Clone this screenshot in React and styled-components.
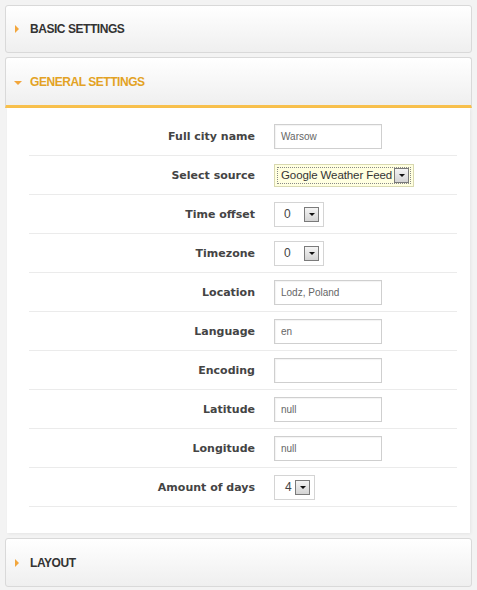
import React from 'react';
import styled, { createGlobalStyle } from 'styled-components';

const Global = createGlobalStyle`
  body {
    margin: 0;
    background: #f3f3f3;
    font-family: 'Liberation Sans', Arial, sans-serif;
  }
`;

const Page = styled.div`
  padding: 5px 5px 3px;
  display: flex;
  flex-direction: column;
`;

const Header = styled.div`
  box-sizing: border-box;
  height: ${(p) => p.h}px;
  margin-top: ${(p) => (p.open ? '4px' : '0')};
  display: flex;
  align-items: center;
  gap: ${(p) => (p.open ? '8px' : '11px')};
  padding-left: ${(p) => (p.open ? '8px' : '9px')};
  padding-top: ${(p) => (p.open ? '1px' : '0')};
  border: 1px solid #d9d9d9;
  border-bottom: ${(p) => (p.open ? '3px solid #f8c04c' : '1px solid #d9d9d9')};
  border-radius: 3px 3px ${(p) => (p.open ? '0 0' : '3px 3px')};
  background: linear-gradient(#ffffff, #efefef);
  font-size: 12px;
  font-weight: bold;
  letter-spacing: -0.45px;
  color: ${(p) => (p.open ? '#e3a224' : '#333')};
`;

const Arrow = styled.span`
  width: 0;
  height: 0;
  ${(p) =>
    p.open
      ? `border-left: 4px solid transparent; border-right: 4px solid transparent; border-top: 4px solid #f2a63c; margin-top: 1px;`
      : `border-top: 4px solid transparent; border-bottom: 4px solid transparent; border-left: 4px solid #f2a63c;`}
`;

const Panel = styled.div`
  margin: 0 2px 5px 2px;
  background: #fff;
  padding: 9px 13px 26px 22px;
  box-shadow: 1px 1px 3px rgba(0, 0, 0, 0.06);
`;

const Row = styled.div`
  height: 38px;
  display: grid;
  grid-template-columns: 226px 1fr;
  column-gap: 19px;
  align-items: center;
  border-bottom: 1px solid #ebebeb;
`;

const Label = styled.div`
  text-align: right;
  font-family: 'DejaVu Sans', Verdana, sans-serif;
  font-size: 11px;
  font-weight: bold;
  color: #444;
`;

const TextInput = styled.div`
  box-sizing: border-box;
  width: 108px;
  height: 25px;
  border: 1px solid #cfcfcf;
  box-shadow: inset 1px 1px 1px rgba(0, 0, 0, 0.05);
  background: #fff;
  display: flex;
  align-items: center;
  padding-left: 6px;
  font-size: 10px;
  color: #666;
`;

const SelectBox = styled.div`
  box-sizing: border-box;
  width: ${(p) => p.w}px;
  height: 25px;
  border: 1px solid #d4d4d4;
  background: #fff;
  display: flex;
  align-items: center;
  justify-content: space-between;
  padding: 0 4px 0 ${(p) => p.pl || 9}px;
  font-size: 12px;
  color: #444;
`;

const Focused = styled.div`
  box-sizing: border-box;
  width: 140px;
  height: 23px;
  border: 1px solid #d8d8b0;
  background: #ffffe0;
  padding: 2px;
  display: flex;
`;

const FocusInner = styled.div`
  flex: 1;
  border: 1px dotted #888;
  display: flex;
  align-items: center;
  justify-content: space-between;
  padding: 0 1px 0 3px;
  font-size: 11.5px;
  letter-spacing: -0.1px;
  white-space: nowrap;
  color: #333;
`;

const DropBtn = styled.span`
  box-sizing: border-box;
  flex: none;
  width: 15px;
  height: 15px;
  border: 1px solid #7a7a7a;
  background: linear-gradient(#f4f4f4, #d4d4d4);
  display: flex;
  align-items: center;
  justify-content: center;
  &::after {
    content: '';
    border-left: 3px solid transparent;
    border-right: 3px solid transparent;
    border-top: 3px solid #111;
  }
`;

const rows = [
  { label: 'Full city name', type: 'text', value: 'Warsow' },
  { label: 'Select source', type: 'focus', value: 'Google Weather Feed' },
  { label: 'Time offset', type: 'select', value: '0', w: 50 },
  { label: 'Timezone', type: 'select', value: '0', w: 50 },
  { label: 'Location', type: 'text', value: 'Lodz, Poland' },
  { label: 'Language', type: 'text', value: 'en' },
  { label: 'Encoding', type: 'text', value: '' },
  { label: 'Latitude', type: 'text', value: 'null' },
  { label: 'Longitude', type: 'text', value: 'null' },
  { label: 'Amount of days', type: 'select', value: '4', w: 41, pl: 10 },
];

function Field({ r }) {
  if (r.type === 'text') return <TextInput>{r.value}</TextInput>;
  if (r.type === 'focus')
    return (
      <Focused>
        <FocusInner>
          {r.value}
          <DropBtn />
        </FocusInner>
      </Focused>
    );
  return (
    <SelectBox w={r.w} pl={r.pl}>
      {r.value}
      <DropBtn />
    </SelectBox>
  );
}

export default function App() {
  return (
    <>
      <Global />
      <Page>
        <Header h={48}>
          <Arrow />
          BASIC SETTINGS
        </Header>
        <Header open h={51}>
          <Arrow open />
          GENERAL SETTINGS
        </Header>
        <Panel>
          {rows.map((r) => (
            <Row key={r.label}>
              <Label>{r.label}</Label>
              <div>
                <Field r={r} />
              </div>
            </Row>
          ))}
        </Panel>
        <Header h={49}>
          <Arrow />
          LAYOUT
        </Header>
      </Page>
    </>
  );
}
